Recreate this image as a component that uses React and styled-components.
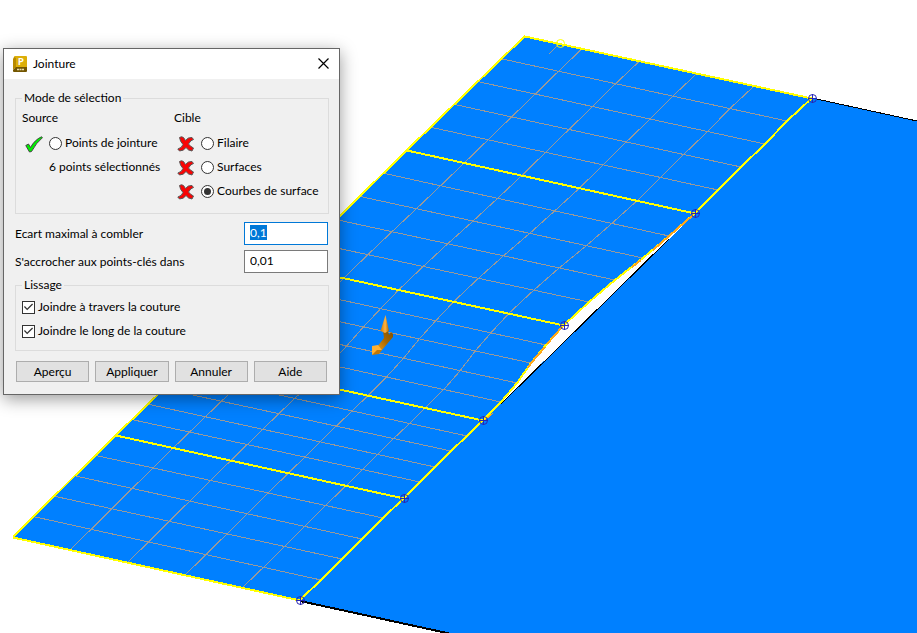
import React, { useEffect, useRef, useState } from "react";
import styled, { createGlobalStyle, css } from "styled-components";

const GlobalStyle = createGlobalStyle`
  * {
    box-sizing: border-box;
  }
  body {
    margin: 0;
    background: #fff;
    color: #000;
    font-family: Lato, "Open Sans", sans-serif;
    font-size: 12px;
    line-height: 16px;
  }
`;

const Viewport = styled.main`
  position: relative;
  height: 100vh;
  min-height: 420px;
  overflow: hidden;
`;

const Scene = styled.svg`
  display: block;
  width: 100%;
  height: 100%;
`;

const Dialog = styled.form`
  position: absolute;
  top: 48px;
  left: 3px;
  width: 337px;
  border: 1px solid #666;
  background: #f0f0f0;
  box-shadow: 0 4px 16px rgba(0, 0, 0, 0.4);
`;

const TitleBar = styled.header`
  display: flex;
  align-items: center;
  gap: 5px;
  height: 30px;
  padding-left: 9px;
  background: #fff;
`;

const Title = styled.h1`
  flex: 1;
  margin: 0;
  font-size: 12px;
  font-weight: 400;
`;

const CloseButton = styled.button`
  display: flex;
  align-items: center;
  justify-content: center;
  align-self: flex-start;
  width: 31px;
  height: 29px;
  padding: 0;
  border: 0;
  background: transparent;
`;

const Body = styled.div`
  padding: 11px 10px 12px 11px;
`;

const Group = styled.fieldset`
  min-width: 0;
  margin: 0;
  padding: ${({ $tight }) => ($tight ? "2px 6px 7px" : "4px 6px 10px")};
  border: 1px solid #dcdcdc;
`;

const Legend = styled.legend`
  padding: 0 2px;
`;

const Columns = styled.div`
  display: grid;
  grid-template-columns: 152px 1fr;
`;

const ColumnTitle = styled.div`
  margin-bottom: 5px;
`;

const Option = styled.div`
  display: flex;
  align-items: center;
  height: 24px;
  white-space: nowrap;
  padding-left: ${({ $indent }) => $indent || 0}px;
`;

const StatusIcon = styled.svg`
  flex: none;
  width: 18px;
  height: 18px;
  margin: 4px 6px 0 0;
`;

const OptionLabel = styled.label`
  display: flex;
  align-items: center;
  gap: 3px;
`;

const box = css`
  appearance: none;
  display: grid;
  place-content: center;
  flex: none;
  width: 13px;
  height: 13px;
  margin: 0;
  border: 1px solid #333;
  background: #fff;
  outline: none;
`;

const Radio = styled.input.attrs({ type: "radio" })`
  ${box}
  border-radius: 50%;
  &:checked::before {
    content: "";
    width: 7px;
    height: 7px;
    border-radius: 50%;
    background: #333;
  }
`;

const Checkbox = styled.input.attrs({ type: "checkbox" })`
  ${box}
  &:checked::before {
    content: "";
    width: 11px;
    height: 11px;
    background: #333;
    clip-path: polygon(9% 50%, 17% 42%, 38% 64%, 83% 18%, 91% 27%, 38% 80%);
  }
`;

const Fields = styled.div`
  display: grid;
  gap: 5px;
  margin: 8px 1px 4px 0;
`;

const Field = styled.label`
  display: flex;
  align-items: center;
  justify-content: space-between;
`;

const TextBox = styled.input.attrs({ type: "text" })`
  width: 84px;
  height: 23px;
  padding: 0 5px 2px;
  border: 1px solid #7a7a7a;
  background: #fff;
  font: inherit;
  color: #000;
  outline: none;
  &:focus {
    border-color: #0078d7;
  }
  &::selection {
    background: #0078d7;
    color: #fff;
  }
`;

const Actions = styled.footer`
  display: grid;
  grid-template-columns: repeat(4, 1fr);
  gap: 6px;
  margin: 10px 2px 0 1px;
`;

const ActionButton = styled.button`
  height: 21px;
  padding: 0;
  border: 1px solid #adadad;
  background: #e1e1e1;
  color: #000;
  font: inherit;
  line-height: 19px;
`;

// Row limits of the meshed surface, from the top edge to the bottom one
const LEFT = [[525, 36], [407, 150], [289, 266], [196, 358], [116, 435], [13, 537]];
const RIGHT = [
  [[812, 98], [787, 121], [765, 144], [741, 167], [718, 190], [695, 213]],
  [[695, 213], [669, 236], [643, 258], [615, 280], [589, 302], [564, 325]],
  [[564, 325], [546, 345], [531, 363], [517, 383], [501, 402], [483, 420]],
  [[483, 420], [467, 436], [451, 451], [435, 467], [420, 482], [404, 498]],
  [[404, 498], [383, 518], [362, 539], [342, 559], [321, 580], [300, 600]],
];

const mix = (a, b, t) => [a[0] + (b[0] - a[0]) * t, a[1] + (b[1] - a[1]) * t];
const toPoints = (list) => list.map((p) => p.join(",")).join(" ");

const rows = RIGHT.flatMap((side, i) =>
  side
    .slice(i === 0 ? 0 : 1)
    .map((end, k) => {
      const step = i === 0 ? k : k + 1;
      return { start: mix(LEFT[i], LEFT[i + 1], step / 5), end, main: step % 5 === 0 };
    })
);
const columns = [0.2, 0.4, 0.6, 0.8].map((t) => rows.map((r) => mix(r.start, r.end, t)));
const seam = rows.map((r) => r.end);
const joints = rows.filter((r) => r.main).map((r) => r.end);

function Joint({ at: [x, y] }) {
  return (
    <g fill="none" stroke="#2828b4" strokeWidth="1">
      <circle cx={x + 0.5} cy={y + 0.5} r="4" />
      <path d={`M${x - 4} ${y + 0.5}h9M${x + 0.5} ${y - 4}v9`} />
    </g>
  );
}

function SurfaceView() {
  return (
    <Scene viewBox="0 0 917 633" preserveAspectRatio="xMinYMin slice" aria-hidden="true">
      <defs>
        <linearGradient id="cone">
          <stop offset="0" stopColor="#c87808" />
          <stop offset="0.55" stopColor="#ffb340" />
          <stop offset="1" stopColor="#a86400" />
        </linearGradient>
        <linearGradient id="shaft" x1="1" y1="0" x2="0" y2="1">
          <stop offset="0" stopColor="#805000" />
          <stop offset="0.5" stopColor="#a86800" />
          <stop offset="1" stopColor="#e89818" />
        </linearGradient>
      </defs>
      <g shapeRendering="crispEdges" fill="none">
        <polygon points="812,98 917,121 2000,358 2000,980 447,633 300,600 483,420 502,402 669,239 695,213" fill="#0080ff" />
        <polyline points="812,98 917,121 2000,358" stroke="#000" />
        <polyline points="300,601 447,633 2000,980" stroke="#000" strokeWidth="2" />
        <line x1="669" y1="239" x2="501" y2="404" stroke="#000" strokeWidth="1" />
        <polygon points={toPoints([LEFT[0], ...seam, LEFT[5]])} fill="#0080ff" />
        <g stroke="#999" strokeWidth="1">
          {rows.filter((r) => !r.main).map((r, i) => (
            <line key={i} x1={r.start[0]} y1={r.start[1]} x2={r.end[0]} y2={r.end[1]} />
          ))}
          {columns.map((c, i) => (
            <polyline key={i} points={toPoints(c)} />
          ))}
          <line x1="558" y1="45" x2="549" y2="54" />
        </g>
        <g stroke="#ff0" strokeWidth="2">
          {rows.filter((r) => r.main).map((r, i) => (
            <line key={i} x1={r.start[0]} y1={r.start[1] + 0.5} x2={r.end[0]} y2={r.end[1] + 0.5} />
          ))}
          <polyline points={toPoints(LEFT)} />
          <polyline points={toPoints(seam)} />
        </g>
        <g stroke="#ffa818" strokeWidth="2">
          <polyline points="693,215 669,236 653,250" />
          <polyline points="641,260 632,267" />
          <polyline points="562,327 547,344" />
          <polyline points="545,347 531,363 528,368" />
          <line x1="493" y1="413" x2="485" y2="420" strokeWidth="1" />
        </g>
      </g>
      <circle cx="560.500" cy="43.500" r="4" fill="none" stroke="#ff0" />
      {joints.map((p) => (
        <Joint key={p.join()} at={p} />
      ))}
      <path d="M383 331h5l1 4 2-3 2 2v3l-11 13-5-3 7-9z" fill="url(#shaft)" />
      <path d="M385.500 315l3.500 16-4 2-4.500-2z" fill="url(#cone)" />
      <path d="M372 346l6-1 4 5-10 5z" fill="#ffb030" />
      <path d="M372 355l5-5 5 0-3 4z" fill="#c07808" />
    </Scene>
  );
}

function AppIcon() {
  return (
    <svg width="15" height="17" viewBox="0 0 15 17" aria-hidden="true">
      <path d="M2 0h11q1 0 1 1v11H1V1q0-1 1-1z" fill="#dcae08" />
      <path d="M1 1l2 1v9l-3 3V3z" fill="#b88a00" />
      <path d="M0 14l3-3h11v4q0 1-1 1H1q-1 0-1-1z" fill="#735600" />
      <path d="M4 13.500h2M6.500 13.500h2M9 13.500h2" stroke="#e8dcb0" strokeWidth="1.500" />
      <text x="5" y="9" fontSize="9" fontWeight="900" fill="#fff">P</text>
    </svg>
  );
}

function CheckIcon() {
  return (
    <StatusIcon viewBox="0 0 18 18" aria-hidden="true">
      <path d="M0.800 9.500L3.500 8l2 3.500Q9.500 4 16.500 0.800l1 .8Q11 7 6.500 15.500L4.500 16z" fill="#00f000" stroke="#444" strokeLinejoin="round" />
    </StatusIcon>
  );
}

function CrossIcon() {
  return (
    <StatusIcon viewBox="0 0 18 18" aria-hidden="true">
      <path d="M2.500 1.500Q4.500 0 6.500 1.500L8.500 4.500Q11 1 15 1.500l1.500 2q-3 .6-5 4.500 2 2.700 5 4l-1.500 3q-4-.4-6-3.500-2.500 3.500-6.500 3.500L.8 13q4-1 5.200-4.500Q3 5.500 2.500 1.500z" fill="#f80404" stroke="#585858" strokeLinejoin="round" />
    </StatusIcon>
  );
}

function RadioOption({ name, text, icon, checked, onChange }) {
  return (
    <Option $indent={3}>
      {icon}
      <OptionLabel>
        <Radio name={name} checked={checked} onChange={onChange} />
        {text}
      </OptionLabel>
    </Option>
  );
}

const TARGETS = ["Filaire", "Surfaces", "Courbes de surface"];

function JoinDialog() {
  const [selected, setSelected] = useState("Courbes de surface");
  const gap = useRef(null);

  useEffect(() => {
    gap.current.focus();
    gap.current.select();
  }, []);

  return (
    <Dialog onSubmit={(e) => e.preventDefault()} role="dialog" aria-labelledby="dialog-title">
      <TitleBar>
        <AppIcon />
        <Title id="dialog-title">Jointure</Title>
        <CloseButton type="button" aria-label="Fermer">
          <svg width="11" height="11" viewBox="0 0 11 11" aria-hidden="true">
            <path d="M.5.5l10 10M10.500.5l-10 10" stroke="#000" strokeWidth="1.200" />
          </svg>
        </CloseButton>
      </TitleBar>
      <Body>
        <Group>
          <Legend>Mode de sélection</Legend>
          <Columns>
            <div>
              <ColumnTitle>Source</ColumnTitle>
              <RadioOption
                name="mode"
                text="Points de jointure"
                icon={<CheckIcon />}
                checked={selected === "Points de jointure"}
                onChange={() => setSelected("Points de jointure")}
              />
              <Option $indent={27}>6 points sélectionnés</Option>
            </div>
            <div>
              <ColumnTitle>Cible</ColumnTitle>
              {TARGETS.map((text) => (
                <RadioOption
                  key={text}
                  name="mode"
                  text={text}
                  icon={<CrossIcon />}
                  checked={selected === text}
                  onChange={() => setSelected(text)}
                />
              ))}
            </div>
          </Columns>
        </Group>
        <Fields>
          <Field>
            Ecart maximal à combler
            <TextBox ref={gap} defaultValue="0,1" />
          </Field>
          <Field>
            S'accrocher aux points-clés dans
            <TextBox defaultValue="0,01" />
          </Field>
        </Fields>
        <Group $tight>
          <Legend>Lissage</Legend>
          <Option>
            <OptionLabel>
              <Checkbox defaultChecked />
              Joindre à travers la couture
            </OptionLabel>
          </Option>
          <Option>
            <OptionLabel>
              <Checkbox defaultChecked />
              Joindre le long de la couture
            </OptionLabel>
          </Option>
        </Group>
        <Actions>
          <ActionButton type="button">Aperçu</ActionButton>
          <ActionButton type="submit">Appliquer</ActionButton>
          <ActionButton type="button">Annuler</ActionButton>
          <ActionButton type="button">Aide</ActionButton>
        </Actions>
      </Body>
    </Dialog>
  );
}

export default function App() {
  return (
    <Viewport>
      <GlobalStyle />
      <SurfaceView />
      <JoinDialog />
    </Viewport>
  );
}
